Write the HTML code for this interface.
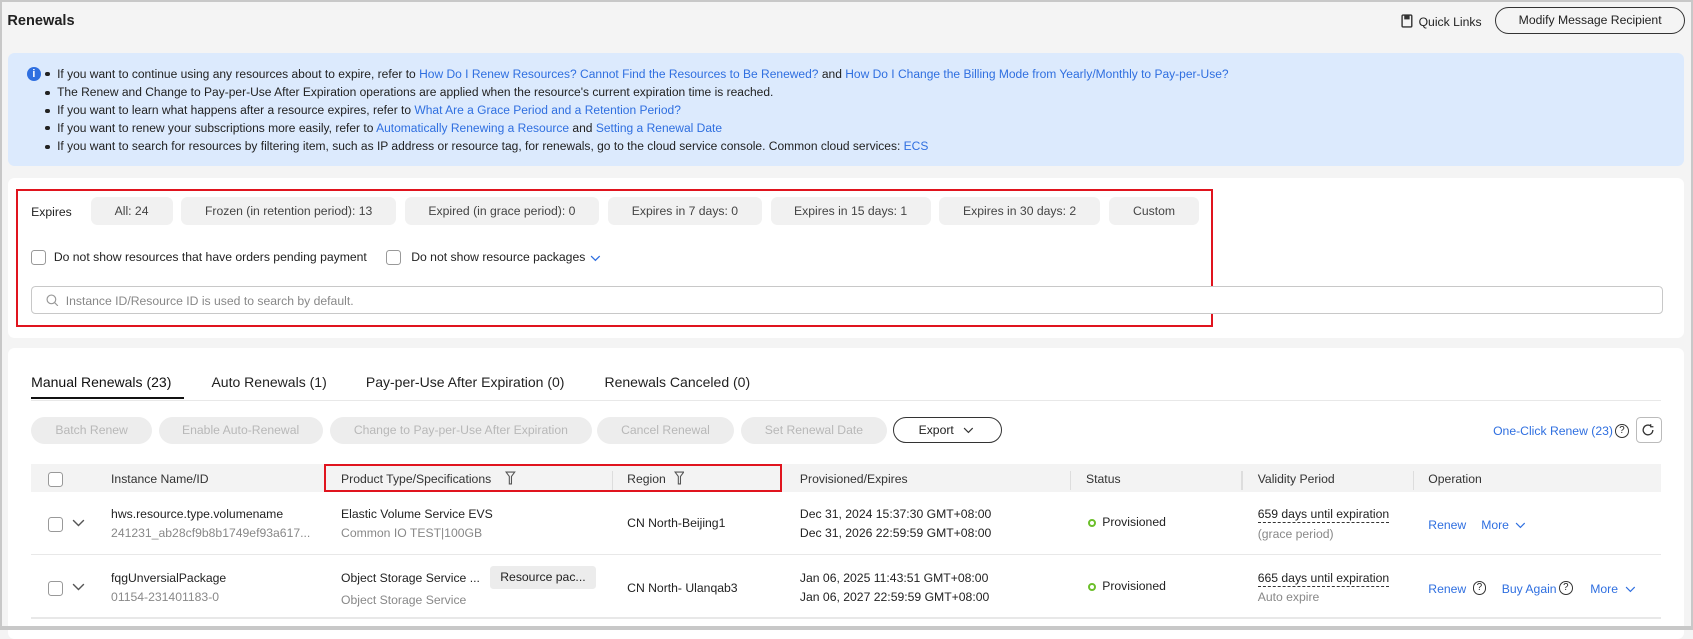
<!DOCTYPE html>
<html><head><meta charset="utf-8">
<style>
html,body{margin:0;padding:0;}
body{width:1693px;height:628px;overflow:hidden;background:#f4f4f4;font-family:"Liberation Sans",Arial,sans-serif;color:#222;}
#z{zoom:1.0797;width:1568px;height:582px;position:relative;box-sizing:border-box;border:2px solid #c8c8c8;border-bottom:none;background:#f4f4f4;}
.a{position:absolute;white-space:nowrap;font-size:11.3px;line-height:14px;}
.i{font-size:11.15px;}
.b{color:#2f6fe0;}
.g{color:#888;}
.chip{position:absolute;top:181px;height:26px;line-height:26px;background:#f1f1f1;border-radius:6px;text-align:center;font-size:11.3px;color:#444;}
.btn{position:absolute;top:384px;height:25px;line-height:25px;background:#ededed;border-radius:13px;text-align:center;font-size:11.3px;color:#b8b8b8;}
.cb{position:absolute;width:12px;height:12px;border:1px solid #999;border-radius:3px;background:#fff;}
.sep{position:absolute;top:434px;width:1px;height:18px;background:#ddd;}
.bul{position:absolute;left:40px;width:4px;height:4px;border-radius:50%;background:#222;}
.q{position:absolute;width:11px;height:11px;border:1px solid #333;border-radius:50%;font-size:9px;line-height:11px;text-align:center;}
.t{font-size:13px;line-height:16px;}
</style></head><body><div id="z">
<div class="a" style="left:5px;top:10px;font-size:13.5px;font-weight:bold;line-height:16px;">Renewals</div>
<svg style="position:absolute;left:1296px;top:11px" width="11" height="13" viewBox="0 0 11 13"><rect x="1" y="1" width="9" height="11" rx="1" fill="none" stroke="#333" stroke-width="1.3"/><rect x="3" y="1" width="5" height="4" fill="#333"/></svg>
<div class="a" style="left:1312px;top:12px;">Quick Links</div>
<div style="position:absolute;left:1383px;top:5px;width:174px;height:23px;border:1px solid #333;border-radius:13px;font-size:11.3px;line-height:23px;text-align:center;">Modify Message Recipient</div>

<div style="position:absolute;left:6px;top:47px;width:1552px;height:105px;background:#dceafd;border-radius:6px;"></div>
<div style="position:absolute;left:23px;top:60px;width:13px;height:13px;border-radius:50%;background:#2f6fe0;color:#fff;font-size:10px;font-weight:bold;text-align:center;line-height:13px;">i</div>
<div class="bul" style="top:65px"></div><div class="bul" style="top:82px"></div><div class="bul" style="top:99px"></div><div class="bul" style="top:115px"></div><div class="bul" style="top:132px"></div>
<div class="a i" style="left:51px;top:60px;">If you want to continue using any resources about to expire, refer to <span class="b">How Do I Renew Resources? Cannot Find the Resources to Be Renewed?</span> and <span class="b">How Do I Change the Billing Mode from Yearly/Monthly to Pay-per-Use?</span></div>
<div class="a i" style="left:51px;top:77px;">The Renew and Change to Pay-per-Use After Expiration operations are applied when the resource's current expiration time is reached.</div>
<div class="a i" style="left:51px;top:94px;">If you want to learn what happens after a resource expires, refer to <span class="b">What Are a Grace Period and a Retention Period?</span></div>
<div class="a i" style="left:51px;top:110px;">If you want to renew your subscriptions more easily, refer to <span class="b">Automatically Renewing a Resource</span> and <span class="b">Setting a Renewal Date</span></div>
<div class="a i" style="left:51px;top:127px;">If you want to search for resources by filtering item, such as IP address or resource tag, for renewals, go to the cloud service console. Common cloud services: <span class="b">ECS</span></div>

<div style="position:absolute;left:6px;top:163px;width:1552px;height:148px;background:#fff;border-radius:6px;"></div>
<div style="position:absolute;left:13px;top:173px;width:1105px;height:124px;border:2px solid #e0141e;"></div>
<div class="a" style="left:27px;top:188px;">Expires</div>
<div class="chip" style="left:82px;width:76px;">All: 24</div>
<div class="chip" style="left:166px;width:199px;">Frozen (in retention period): 13</div>
<div class="chip" style="left:373px;width:180px;">Expired (in grace period): 0</div>
<div class="chip" style="left:561px;width:143px;">Expires in 7 days: 0</div>
<div class="chip" style="left:712px;width:148px;">Expires in 15 days: 1</div>
<div class="chip" style="left:868px;width:149px;">Expires in 30 days: 2</div>
<div class="chip" style="left:1025px;width:84px;">Custom</div>
<div class="cb" style="left:27px;top:230px;"></div>
<div class="a" style="left:48px;top:230px;">Do not show resources that have orders pending payment</div>
<div class="cb" style="left:356px;top:230px;"></div>
<div class="a" style="left:379px;top:230px;">Do not show resource packages</div>
<svg style="position:absolute;left:545px;top:234px" width="10" height="7" viewBox="0 0 10 7"><path d="M1 1l4 4 4-4" fill="none" stroke="#2f6fe0" stroke-width="1.2"/></svg>
<div style="position:absolute;left:27px;top:263px;width:1510px;height:24px;border:1px solid #c8c8c8;border-radius:4px;background:#fff;"></div>
<svg style="position:absolute;left:41px;top:270px" width="12" height="12" viewBox="0 0 12 12"><circle cx="5" cy="5" r="4" fill="none" stroke="#999" stroke-width="1.1"/><path d="M8 8l3 3" stroke="#999" stroke-width="1.1"/></svg>
<div class="a g" style="left:59px;top:270px;">Instance ID/Resource ID is used to search by default.</div>

<div style="position:absolute;left:6px;top:320px;width:1552px;height:270px;background:#fff;border-radius:6px;"></div>
<div class="a t" style="left:27px;top:345px;color:#111;">Manual Renewals (23)</div>
<div style="position:absolute;left:27px;top:366px;width:142px;height:2px;background:#111;"></div>
<div class="a t" style="left:194px;top:345px;">Auto Renewals (1)</div>
<div class="a t" style="left:337px;top:345px;">Pay-per-Use After Expiration (0)</div>
<div class="a t" style="left:558px;top:345px;">Renewals Canceled (0)</div>
<div style="position:absolute;left:27px;top:369px;width:1510px;height:1px;background:#e8e8e8;"></div>

<div class="btn" style="left:27px;width:112px;">Batch Renew</div>
<div class="btn" style="left:145px;width:152px;">Enable Auto-Renewal</div>
<div class="btn" style="left:304px;width:242px;">Change to Pay-per-Use After Expiration</div>
<div class="btn" style="left:551px;width:127px;">Cancel Renewal</div>
<div class="btn" style="left:684px;width:136px;">Set Renewal Date</div>
<div style="position:absolute;left:825px;top:384px;width:99px;height:23px;border:1px solid #333;border-radius:13px;font-size:11.3px;line-height:23px;color:#222;"><span style="position:absolute;left:23px;">Export</span><svg style="position:absolute;left:64px;top:9px" width="10" height="6" viewBox="0 0 10 6"><path d="M1 1l4 4 4-4" fill="none" stroke="#333" stroke-width="1.1"/></svg></div>
<div class="a b" style="left:1381px;top:391px;">One-Click Renew (23)</div>
<div class="q" style="left:1494px;top:391px;">?</div>
<div style="position:absolute;left:1513px;top:384px;width:23px;height:23px;border:1px solid #bbb;border-radius:4px;"></div>
<svg style="position:absolute;left:1518px;top:390px" width="14" height="13" viewBox="0 0 14 13"><path d="M11 6.5a4.5 4.5 0 1 1-2-3.8" fill="none" stroke="#333" stroke-width="1.2"/><path d="M9 1v2.5h2.5" fill="none" stroke="#333" stroke-width="1.1"/></svg>

<div style="position:absolute;left:27px;top:428px;width:1510px;height:26px;background:#f3f3f3;"></div>
<div class="cb" style="left:43px;top:435px;"></div>
<div class="a" style="left:101px;top:435px;color:#333;">Instance Name/ID</div>
<div class="a" style="left:314px;top:435px;color:#333;">Product Type/Specifications</div>
<svg style="position:absolute;left:466px;top:434px" width="10" height="13" viewBox="0 0 10 13"><path d="M1 1h8L6 5v7H4V5z" fill="none" stroke="#555" stroke-width="1"/></svg>
<div class="sep" style="left:565px;"></div>
<div class="a" style="left:579px;top:435px;color:#333;">Region</div>
<svg style="position:absolute;left:622px;top:434px" width="10" height="13" viewBox="0 0 10 13"><path d="M1 1h8L6 5v7H4V5z" fill="none" stroke="#555" stroke-width="1"/></svg>
<div style="position:absolute;left:298px;top:428px;width:421px;height:22px;border:2px solid #e0141e;"></div>
<div class="a" style="left:739px;top:435px;color:#333;">Provisioned/Expires</div>
<div class="sep" style="left:989px;"></div>
<div class="a" style="left:1004px;top:435px;color:#333;">Status</div>
<div class="sep" style="left:1148px;"></div>
<div class="a" style="left:1163px;top:435px;color:#333;">Validity Period</div>
<div class="sep" style="left:1307px;"></div>
<div class="a" style="left:1321px;top:435px;color:#333;">Operation</div>

<div class="cb" style="left:43px;top:477px;"></div>
<svg style="position:absolute;left:65px;top:479px" width="12" height="8" viewBox="0 0 12 8"><path d="M1 1l5 5 5-5" fill="none" stroke="#555" stroke-width="1.3"/></svg>
<div class="a" style="left:101px;top:468px;">hws.resource.type.volumename</div>
<div class="a g" style="left:101px;top:485px;">241231_ab28cf9b8b1749ef93a617...</div>
<div class="a" style="left:314px;top:468px;">Elastic Volume Service EVS</div>
<div class="a g" style="left:314px;top:485px;">Common IO TEST|100GB</div>
<div class="a" style="left:579px;top:476px;">CN North-Beijing1</div>
<div class="a" style="left:739px;top:468px;">Dec 31, 2024 15:37:30 GMT+08:00</div>
<div class="a" style="left:739px;top:485px;">Dec 31, 2026 22:59:59 GMT+08:00</div>
<div style="position:absolute;left:1006px;top:479px;width:4px;height:4px;border:2px solid #6cbf2b;border-radius:50%;"></div>
<div class="a" style="left:1019px;top:475px;">Provisioned</div>
<div class="a" style="left:1163px;top:468px;border-bottom:1px dashed #333;">659 days until expiration</div>
<div class="a g" style="left:1163px;top:486px;">(grace period)</div>
<div class="a b" style="left:1321px;top:478px;">Renew</div>
<div class="a b" style="left:1370px;top:478px;">More</div>
<svg style="position:absolute;left:1401px;top:482px" width="10" height="6" viewBox="0 0 10 6"><path d="M1 1l4 4 4-4" fill="none" stroke="#2f6fe0" stroke-width="1.1"/></svg>
<div style="position:absolute;left:27px;top:511px;width:1510px;height:1px;background:#e8e8e8;"></div>

<div class="cb" style="left:43px;top:536px;"></div>
<svg style="position:absolute;left:65px;top:538px" width="12" height="8" viewBox="0 0 12 8"><path d="M1 1l5 5 5-5" fill="none" stroke="#555" stroke-width="1.3"/></svg>
<div class="a" style="left:101px;top:527px;">fqgUnversialPackage</div>
<div class="a g" style="left:101px;top:545px;">01154-231401183-0</div>
<div class="a" style="left:314px;top:527px;">Object Storage Service ...</div>
<div style="position:absolute;left:452px;top:522px;width:98px;height:22px;background:#ececec;border-radius:3px;font-size:11.3px;line-height:22px;text-align:center;">Resource pac...</div>
<div class="a g" style="left:314px;top:547px;">Object Storage Service</div>
<div class="a" style="left:579px;top:536px;">CN North- Ulanqab3</div>
<div class="a" style="left:739px;top:527px;">Jan 06, 2025 11:43:51 GMT+08:00</div>
<div class="a" style="left:739px;top:545px;">Jan 06, 2027 22:59:59 GMT+08:00</div>
<div style="position:absolute;left:1006px;top:538px;width:4px;height:4px;border:2px solid #6cbf2b;border-radius:50%;"></div>
<div class="a" style="left:1019px;top:534px;">Provisioned</div>
<div class="a" style="left:1163px;top:527px;border-bottom:1px dashed #333;">665 days until expiration</div>
<div class="a g" style="left:1163px;top:545px;">Auto expire</div>
<div class="a b" style="left:1321px;top:537px;">Renew</div>
<div class="q" style="left:1362px;top:536px;">?</div>
<div class="a b" style="left:1389px;top:537px;">Buy Again</div>
<div class="q" style="left:1442px;top:536px;">?</div>
<div class="a b" style="left:1471px;top:537px;">More</div>
<svg style="position:absolute;left:1503px;top:541px" width="10" height="6" viewBox="0 0 10 6"><path d="M1 1l4 4 4-4" fill="none" stroke="#2f6fe0" stroke-width="1.1"/></svg>
<div style="position:absolute;left:27px;top:570px;width:1510px;height:1px;background:#e8e8e8;"></div>
<div style="position:absolute;left:-2px;top:578px;width:1568px;height:4px;background:#c8c8c8;"></div>
</div></body></html>
